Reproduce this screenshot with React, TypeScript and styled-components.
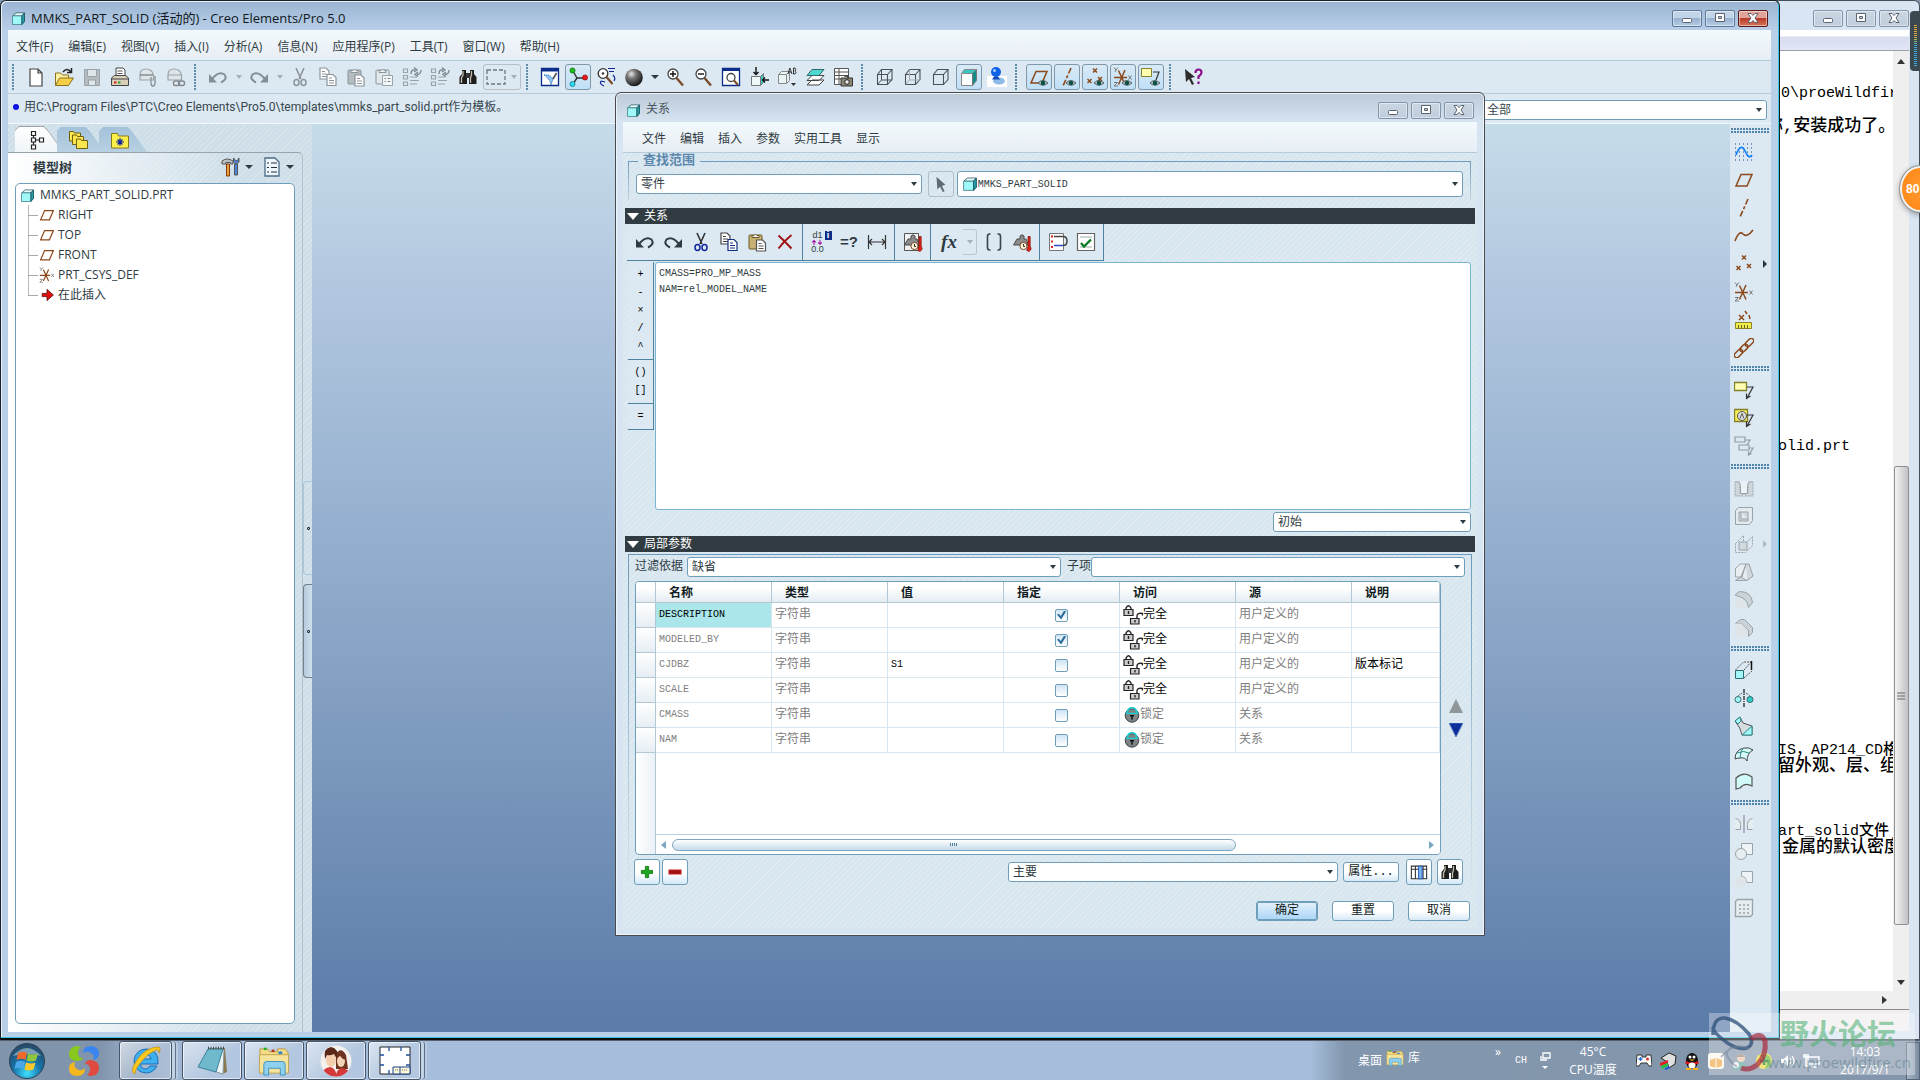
import React from "react";
import styled, { createGlobalStyle, css } from "styled-components";

const UI = '"Open Sans", "Noto Sans CJK SC", sans-serif';
const NARROW = 'Roboto, "Noto Sans CJK SC", sans-serif';
const SONG = '"Liberation Mono", "Noto Sans CJK SC", monospace';
const INK = "#2f3b42";
const EDGE = "#6f9fb8";
const RULE = "#4f81a3";

const GlobalStyle = createGlobalStyle`
  *, *::before, *::after { box-sizing: border-box; }
  html, body { margin: 0; height: 100%; overflow: hidden; }
  body { font-family: ${UI}; font-size: 12px; line-height: 16px; color: ${INK}; background: #8397ae; }
  button, select, input, textarea { font: inherit; color: inherit; margin: 0; border-radius: 0; }
  button { border: 0; background: none; padding: 0; }
  ul { list-style: none; margin: 0; padding: 0; }
  svg { display: block; flex: none; }
`;

/* ------------------------------------------------------------------ icons */

const g = "#9aa3a8";
const br = "#8c4a1c";
const cy = "#a0f8f8";

const planeShape = <path d="M7 4.500H18L13 16H2Z" fill="none" stroke={br} strokeWidth="1.500" />;
const axisShape = <path d="M14 1L6 19" stroke={br} strokeWidth="1.600" strokeDasharray="6 2 3 2" />;
const crosses = (
  <path d="M8 1.500l4 4m0-4l-4 4M2.500 12l4 4m0-4l-4 4M13 10l4 4m0-4l-4 4" stroke={br} strokeWidth="1.500" />
);
const csysShape = (
  <>
    <path d="M1 10.500H14M5.500 3.500l6.500 14M12 3L5.500 17.500" stroke={br} strokeWidth="1.500" fill="none" />
    <path d="M1 0.500l2 2.500L5 .500M3 3L2 5M15.500 8.500l3 4m0-4l-3 4M1 15.500h3.500L1 19h4" stroke="#777" fill="none" />
  </>
);
const eye = (
  <>
    <path d="M9 16q4.500-5 10 0q-5 4.500-10 0z" fill="#b9c8cc" stroke="#444" strokeWidth=".8" />
    <circle cx="14" cy="16" r="2.300" fill="#0b5148" />
  </>
);
const lens = (
  <>
    <circle cx="8" cy="7" r="5" fill="#fff" stroke="#444" strokeWidth="1.300" />
    <path d="M11.500 11l6.500 7.500" stroke="#7a4a2a" strokeWidth="2.400" />
  </>
);
const cubeWire = (c: string, hidden?: string) => (
  <>
    <path d="M2.500 7.500h10v10h-10zM2.500 7.500l4-5h10.500v10l-4.500 5M12.500 7.500l4.500-5" fill="none" stroke={c} strokeWidth="1.100" />
    {hidden && <path d="M6.500 2.500v10.500h10.500M6.500 13l-4 4.500" fill="none" stroke={hidden} strokeWidth="1" />}
  </>
);
const page = (x: number, y: number, s: string) => (
  <>
    <path d={`M${x} ${y}h6l3 3v8h-9z`} fill="#fff" stroke={s} strokeWidth="1.200" />
    <path d={`M${x + 2} ${y + 3.5}h3m-3 2.500h5m-5 2.500h5`} stroke={s} />
  </>
);
const clip = (c: string, f: string) => (
  <>
    <rect x="2" y="3" width="13" height="14" rx="1" fill={f} stroke={c} />
    <path d="M5 5.500V3.500h2q1.500-3 3 0h2v2z" fill="#eee" stroke={c} />
  </>
);
const scissors = (a: string, b: string) => (
  <>
    <path d="M6 1l5 11M14 1L9 12" stroke={a} strokeWidth="1.600" fill="none" />
    <ellipse cx="6.500" cy="15.500" rx="2.500" ry="3" fill="none" stroke={b} strokeWidth="1.500" />
    <ellipse cx="13.500" cy="15.500" rx="2.500" ry="3" fill="none" stroke={b} strokeWidth="1.500" />
  </>
);
const undoShape = (c: string) => (
  <>
    <path d="M4 12Q11 3.500 16.500 7.500Q20 12 13 15.500" fill="none" stroke={c} strokeWidth="2" />
    <path d="M1 7v8.500h8z" fill={c} />
  </>
);
const regen = (
  <>
    <path d="M1.500 2h4v3.500h-4zM1.500 8.500h4v3.500h-4zM1.500 15h4v3.500h-4zM8 10h7M8 13.500h9M8 17h7" fill="none" stroke={g} strokeWidth="1.200" />
    <path d="M9 7q0-5 4-4M19 3q0 4.500-4 4.500M12 .500l3 2.500-3 2M16 5l-3 2.500 3 2" fill="none" stroke="#7c868b" strokeWidth="1.300" />
  </>
);
const binoculars = (
  <>
    <path d="M4 3h4v4l1 3v7H1.500v-7L4 7zM12 3h4v4l2.500 3v7H11v-7l1-3z" fill="#1d1d1b" />
    <path d="M8 6h4v5H8z" fill="#333" />
    <path d="M5 4v4l-1.500 3v5M13.500 4v4l-1 3v5" stroke="#c5bfae" strokeWidth="1.300" fill="none" />
  </>
);
const weight = <path d="M1.500 13L5 7h3V4q2-2.500 4 0v3h2l2.500 6z" fill="#8b8b8b" stroke="#4b4b4b" />;
const thermo = (
  <>
    <circle cx="11.500" cy="14" r="3.600" fill="#fff3d8" stroke="#7a4a2a" />
    <path d="M11.500 12v2.500h1.500" stroke="#333" fill="none" />
    <path d="M16 4.500h2.200v9.500l1 3-2 2.500-2.500-1 1.300-4z" fill="#e22418" stroke="#7d120c" strokeWidth=".7" />
  </>
);
const noteArrow = (c: string) => <path d="M13 7h6l-6 11M12.500 13.500v5l4-2.500" fill="none" stroke={c} strokeWidth="1.200" />;

const icons: Record<string, React.ReactNode> = {
  part: (
    <>
      <path d="M2.500 6l4-3.500h11.500v11.500l-3.500 4z" fill="#1e6f78" />
      <path d="M2.500 6.500l4-4h11.500l-3.500 4z" fill="#e9ffff" stroke="#2c5960" />
      <path d="M2 6.500h12.500v11.500h-12.500z" fill={cy} stroke="#3f7c84" />
      <path d="M14.500 6.500l3.500-4v11.500l-3.500 4z" fill="#279eaa" stroke="#174d55" />
    </>
  ),
  newFile: <path d="M4 2h8l4 4v13H4zM12 2v4h4" fill="#fff" stroke="#444" strokeWidth="1.200" />,
  open: (
    <>
      <path d="M1.500 18V6h5l2 2h6v4" fill="#fff3a0" stroke="#8a7320" />
      <path d="M1.500 18.500l4-7.500h14l-5 7.500z" fill="#f4cf45" stroke="#8a7320" />
      <path d="M9 5q4-5 8 0M17.500 1v4.500H13" fill="none" stroke="#222" strokeWidth="1.500" />
    </>
  ),
  save: (
    <>
      <path d="M2.500 2.500h15v16h-15z" fill="#b4bcc0" stroke="#9ba4a9" />
      <path d="M5.500 2.500h9v7h-9zM6.500 13h7v5.500h-7z" fill="#dfe6ea" stroke={g} />
    </>
  ),
  print: (
    <>
      <path d="M6 9V1h7l2 2v6" fill="#fff" stroke="#444" />
      <path d="M7.500 4h5m-5 2.500h5" stroke="#555" />
      <path d="M1.500 11l3-2.500h11l3 2.500v7.500h-17z" fill="#d9cfb9" stroke="#444" />
      <path d="M2 12h16" stroke="#444" />
      <path d="M4 15.500h2.500" stroke="#d22" strokeWidth="2" />
      <path d="M8 15.500h2.500" stroke="#2a2" strokeWidth="2" />
    </>
  ),
  mail: (
    <>
      <path d="M2 13V8q0-6 6-6q6 0 7.500 6v5z" fill="#dfe6ea" stroke={g} strokeWidth="1.200" />
      <path d="M2 8h13M13 10v6q0 3 2 3t2-3V9" fill="none" stroke="#888f94" strokeWidth="1.300" />
    </>
  ),
  mailLink: (
    <>
      <path d="M2 13V8q0-6 6-6q6 0 7.500 6v5z" fill="#dfe6ea" stroke={g} strokeWidth="1.200" />
      <path d="M2 8h13" stroke={g} />
      <rect x="7.500" y="14" width="6" height="4.500" rx="2" fill="#e8eef1" stroke="#80888d" strokeWidth="1.400" />
      <rect x="12.500" y="14" width="6" height="4.500" rx="2" fill="none" stroke="#80888d" strokeWidth="1.400" />
    </>
  ),
  undoOff: undoShape("#848e94"),
  redoOff: <g transform="matrix(-1 0 0 1 20 0)">{undoShape("#848e94")}</g>,
  undo: undoShape("#2e3c42"),
  redo: <g transform="matrix(-1 0 0 1 20 0)">{undoShape("#2e3c42")}</g>,
  cutOff: scissors("#8b9499", "#8b9499"),
  cut: scissors("#333", "#10259a"),
  copyOff: <>{page(2, 1, "#8b9499")}{page(9, 7.5, "#8b9499")}</>,
  copy: <>{page(2, 1, "#444")}{page(9, 7.5, "#12307f")}</>,
  pasteOff: <>{clip("#8b9499", "#b5bdc1")}{page(9, 8, "#8b9499")}</>,
  paste: <>{clip("#6b5a28", "#c8b273")}{page(9.5, 8, "#555")}</>,
  pasteSpecial: <>{clip("#8b9499", "#e2e9ed")}<path d="M8.500 8.500h10v10h-10z" fill="#f3f7f9" stroke={g} /><path d="M10.500 11.500h1.500m1.500 0h3m-6 3h1.500m1.500 0h3" stroke="#888" /></>,
  regen,
  find: binoculars,
  repaint: (
    <>
      <path d="M1.500 1.500h17v17h-17z" fill="#fff" stroke="#0c2e8a" strokeWidth="1.300" />
      <path d="M1 1h18v3.500H1z" fill="#0c2e8a" />
      <path d="M4 8q6-1 9 4l-2 6q-1-6-7-10z" fill="#8fc4f4" stroke="#2468b4" strokeDasharray="1 1" />
      <path d="M16.500 6l-3.500 6" stroke="#555" strokeWidth="1.700" />
    </>
  ),
  spin: (
    <>
      <path d="M5 4l4 7h8M9 11l-4 6" fill="none" stroke="#333" strokeWidth="1.400" />
      <circle cx="4.500" cy="3.500" r="2.600" fill="#18c018" stroke="#0a5a0a" strokeWidth=".6" />
      <circle cx="17" cy="10.500" r="2.600" fill="#e81c1c" stroke="#7a0a0a" strokeWidth=".6" />
      <circle cx="4.500" cy="17" r="2.600" fill="#28d8e8" stroke="#0a6a7a" strokeWidth=".6" />
    </>
  ),
  orient: (
    <>
      <circle cx="7" cy="6.500" r="4.800" fill="#fff" stroke="#333" strokeWidth="1.300" />
      <circle cx="7" cy="6.500" r="1.200" fill="#333" />
      <path d="M10.500 10l6 7" stroke="#7a4a2a" strokeWidth="2.200" />
      <path d="M12 1.500h7M13 4.500h5M5 14q-2 3 3 5M17 8q3 3 1 6M5 14l4 1" stroke="#10259a" fill="none" strokeWidth="1.200" />
    </>
  ),
  sphere: (
    <>
      <defs>
        <radialGradient id="ball" cx=".35" cy=".3" r=".75">
          <stop offset="0" stopColor="#e8e8e8" />
          <stop offset=".35" stopColor="#777" />
          <stop offset="1" stopColor="#111" />
        </radialGradient>
      </defs>
      <circle cx="10" cy="10.500" r="8.800" fill="url(#ball)" />
    </>
  ),
  zoomIn: <>{lens}<path d="M5 7h6M8 4v6" stroke="#111" strokeWidth="1.400" /></>,
  zoomOut: <>{lens}<path d="M5 7h6" stroke="#111" strokeWidth="1.400" /></>,
  refit: (
    <>
      <path d="M1.500 1.500h17v17h-17z" fill="#fff" stroke="#0c2e8a" strokeWidth="1.300" />
      <path d="M1 1h18v3H1z" fill="#0c2e8a" />
      <circle cx="10" cy="10.500" r="4" fill="#fff" stroke="#444" strokeWidth="1.300" />
      <path d="M13 13.500l4 4.500" stroke="#7a4a2a" strokeWidth="2" />
    </>
  ),
  reorient: (
    <>
      <path d="M2.500 9.500h9v9h-9z" fill="#eef8f8" stroke="#777" />
      <path d="M11.500 9.500l3-3v9l-3 3z" fill="#40c8c0" stroke="#777" />
      <path d="M7 0v7M4.500 5L7 7.500 9.500 5M20 13h-6M16 10.500L13.500 13l2.500 2.500" fill="none" stroke="#111" strokeWidth="1.400" />
    </>
  ),
  savedView: (
    <>
      <path d="M1.500 7.500h8v9h-8zM1.500 7.500l3-3h8l-3 3M9.500 16.500l3-3v-9" fill="#e9f6f6" stroke="#888" />
      <path d="M11 7l1.800-6L15 7m-3.300-2h2.500M16.500 1v6h1.500q2-1.500 0-3q1.500-1.500 0-3z" fill="none" stroke="#333" />
      <path d="M14 16h5l-2.500 3z" fill="#333" />
    </>
  ),
  layers: (
    <>
      <path d="M2 18l5-5h12l-5 5zM2 13.500l5-5h12l-5 5z" fill="#fff" stroke="#444" />
      <path d="M2 8.500l5-6h12l-5 6z" fill="#50d8d0" stroke="#2b6a68" />
    </>
  ),
  viewMgr: (
    <>
      <path d="M1.500 1.500h14v16h-14zM1.500 5h14M1.500 8.500h14M1.500 12h14M6 1.500v16" fill="#fff" stroke="#555" />
      <path d="M8 11h11.500v8H8zM11 9h4v2" fill="#8c8674" stroke="#333" />
      <circle cx="14" cy="15" r="2.300" fill="#eee" stroke="#222" />
    </>
  ),
  wire: cubeWire("#4b5357", "#4b5357"),
  hiddenLine: cubeWire("#4b5357", "#a5adb1"),
  noHidden: cubeWire("#4b5357"),
  shaded: (
    <>
      <path d="M2.500 6.500l3-4h12l-4 4z" fill="#38c8c0" stroke="#888" />
      <path d="M2.500 6.500h11v12h-11z" fill="#fff" stroke="#888" />
      <path d="M13.500 6.500l4-4v11l-4 5z" fill="#168c88" stroke="#777" />
    </>
  ),
  enhanced: (
    <>
      <path d="M0 9h20v11H0z" fill="#fff" />
      <ellipse cx="12" cy="14" rx="6" ry="3.500" fill="#8fbbe8" />
      <circle cx="9" cy="5" r="5" fill="#0e62e8" />
      <circle cx="7.500" cy="3.500" r="1.500" fill="#a8d0ff" />
      <path d="M7 9.500h4l2 3H5z" fill="#0c4cb4" />
    </>
  ),
  planeEye: <>{planeShape}{eye}</>,
  axisEye: <>{axisShape}{eye}</>,
  pointEye: <>{crosses}{eye}</>,
  csysEye: <>{csysShape}{eye}</>,
  noteEye: <><path d="M.500 1.500h10v8h-10z" fill="#ffffb0" stroke="#888030" /><path d="M12 5h6l-3 8" fill="none" stroke="#333" strokeWidth="1.200" />{eye}</>,
  help: (
    <>
      <path d="M2 2l1 13 3-3 3 6 2-1-3-6 4-1z" fill="#2d2d2d" />
      <path d="M12.500 6q0-3.500 3-3.500t3 3q0 2-3 4v2.500M15.500 14.500v2.500" fill="none" stroke="#8a108a" strokeWidth="2.200" />
    </>
  ),
  sketch: (
    <>
      <path d="M1 2h18M1 6h18M1 10h18M1 14h18M1 18h18" stroke="#1a3c90" strokeDasharray="1 3" />
      <path d="M2 13q5-13 9-4t7 4" fill="none" stroke="#1484ff" strokeWidth="1.800" />
    </>
  ),
  plane: planeShape,
  axis: axisShape,
  curve: <path d="M1 15Q5 4 9 8t10-4" fill="none" stroke={br} strokeWidth="1.600" />,
  points: crosses,
  csys: csysShape,
  ruler: (
    <>
      <path d="M5 5l5 5m0-5l-5 5M11 1l2 3M15 5l1 4" stroke={br} strokeWidth="1.500" />
      <path d="M1.500 12.500h16v6h-16z" fill="#f0ec50" stroke="#8c8420" />
      <path d="M4.500 18v-3m3 3v-3m3 3v-3m3 3v-3" stroke="#6a641a" />
    </>
  ),
  chain: (
    <g fill="none" stroke={br} strokeWidth="1.500">
      <rect x="-5" y="-2.500" width="10" height="5" rx="2.500" transform="translate(4.500 15.500) rotate(-45)" />
      <rect x="-4.500" y="-2.500" width="9" height="5" rx="2.500" transform="translate(10 10) rotate(-45)" />
      <rect x="-5" y="-2.500" width="10" height="5" rx="2.500" transform="translate(15.500 4.500) rotate(-45)" />
    </g>
  ),
  note: <><path d="M.500 2.500h12v8H.500z" fill="#ffffb4" stroke="#85802a" strokeWidth="1.300" />{noteArrow("#333")}</>,
  noteSym: <><path d="M.500 1.500h13v12H.500z" fill="#f2ee58" stroke="#85802a" strokeWidth="1.300" /><circle cx="8" cy="8" r="4.500" fill="#ddd" stroke="#555" /><path d="M6 10.500L8 5.500l2 5" fill="none" stroke="#555" />{noteArrow("#333")}</>,
  noteOff: <path d="M1 1h10v5H1zM5 9h10v5H5zM11 4h5l-3 5M15 12h4l-4 7M14.500 15.500v3.500l3-1.500" fill="none" stroke="#929ca2" strokeWidth="1.200" />,
  hole: <><path d="M1 4h5v11l3 1v2H1zM19 4h-5v11l-3 1v2h8z" fill="#cfd8dd" stroke={g} strokeDasharray="2 1" /><path d="M3 3.500q3.500.500 3.500 4v8h7v-8q0-3.500 3.500-4" fill="#eef3f6" stroke={g} /></>,
  shell: <><path d="M1.500 4.500l3-3h14v13l-3 4h-14z" fill="#e4ebef" stroke={g} /><path d="M5 6h9v9H5zM7 6v7h7" fill="#d0d9de" stroke={g} /></>,
  rib: <><path d="M1.500 9.500l8-8v6M1.500 9.500v9h10l7-7v-9l-7 7" fill="none" stroke={g} strokeDasharray="2 1" /><path d="M5 8h8v8H5z" fill="#d0d9de" stroke={g} /></>,
  draft: <><path d="M12 2h3l4 12-6 4.500H1.500l5-3z" fill="#cfd8dd" stroke={g} /><path d="M1.500 6.500l5-4.500H12L8 15H1.500zM12 2l-5 13 6 3.500" fill="#e8eef1" stroke={g} /></>,
  round: <><path d="M1.500 4.500l4-3q12 0 13 11l-4 5q-1-10-13-12z" fill="#cbd3d8" stroke={g} /><path d="M1.500 8q9 0 12 10h-12z" fill="#dfe4e8" /></>,
  chamfer: <><path d="M1.500 5.500l5-4h4l8 8v5l-4 4v-6L7 5.500z" fill="#cbd3d8" stroke={g} /><path d="M1.500 5.500H7l7 7v6H1.500z" fill="#dfe4e8" /></>,
  extrude: <><path d="M1.500 10.500h8v8h-8z" fill={cy} stroke="#336a70" /><path d="M1.500 10l8-8h8M10 10l7-8M10 18l8-7" fill="none" stroke="#555" strokeDasharray="2 1" /><path d="M17.500 1v9" stroke="#111" strokeWidth="1.500" /></>,
  revolve: <><path d="M10 1v18" stroke="#333" strokeDasharray="4 1 1 1" strokeWidth="1.400" /><circle cx="4" cy="11.500" r="3" fill={cy} stroke="#336a70" /><circle cx="16" cy="11.500" r="3" fill="#30d0c8" stroke="#336a70" /><path d="M4 8q6-6 12 0" fill="none" stroke="#666" strokeDasharray="2 1" /></>,
  sweep: <><path d="M1 5l5-4 3 6 9 3v9H8Q7 12 1 5z" fill="#d6dcdf" stroke="#555" /><path d="M1 5l5-4 1 4-3 3zM8 19l10-9v9z" fill={cy} stroke="#2b8a88" /></>,
  blend: <><path d="M1 15q0-9 9-11 5-1 9 2-6 3-6 11-2-4-7-3-3 0-5 1z" fill="#d8fbfa" stroke="#444" /><path d="M3 9q7-3 12 0M9 4q-3 5-3 10" fill="none" stroke="#2b8a88" /></>,
  style: <path d="M2 6q8-7 16-1v9q-7-4-12 2l-4 1z" fill="#d0fbf8" stroke="#555" strokeWidth="1.200" />,
  mirror: <><path d="M10 1v18" stroke={g} strokeWidth="1.500" /><path d="M1.500 4.500q5 1 5 6v5h-5M18.500 4.500q-5 1-5 6v5h5" fill="#e6edf1" stroke={g} /></>,
  merge: <><path d="M7.500 1.500h11v11h-11z" fill="#eef3f6" stroke={g} /><circle cx="7" cy="12" r="5.500" fill="#e6edf1" stroke={g} /></>,
  trim: <><path d="M7.500 1.500h11v11h-6q0-6-5-6z" fill="#eef3f6" stroke={g} /><circle cx="7" cy="12" r="5.500" fill="#dfe4e8" /></>,
  pattern: <><path d="M1.500 3.500l2-2h15v15l-2 2h-15z" fill="#e6edf1" stroke={g} strokeWidth="1.300" /><path d="M5 7h11M5 11h11M5 15h11" stroke={g} strokeWidth="1.500" strokeDasharray="2 2" /></>,
  treeTab: <path d="M5.500 1.500h4v4h-4zM5.500 8h4v4h-4zM5.500 15h4v4h-4zM13.500 8h4v4h-4zM7.500 5.500V8M7.500 12v3M9.500 10h4" fill="#fff" stroke="#222" strokeWidth="1.200" />,
  folders: (
    <g fill="#fbe64e" stroke="#6e6110">
      <path d="M1.500 1.500h4l1 1.500h6v8h-11z" />
      <path d="M4.500 5h4l1 1.500h6v8h-11z" />
      <path d="M8.500 9h4l1 1.500h6v8h-11z" />
    </g>
  ),
  favFolder: (
    <>
      <path d="M1.500 3.500h6l1 2.500h10v12h-17z" fill="#fdf04a" stroke="#8a7b18" />
      <path d="M10 8v8M6 12h8M7.500 9.500l5 5M12.500 9.500l-5 5" stroke="#10259a" strokeWidth="1.200" />
    </>
  ),
  tools: (
    <>
      <path d="M1 4q5-4 11 0v3H9.500V5.500H5V7H1z" fill="#b9c0c2" stroke="#555" />
      <path d="M5.500 7h3v12h-3z" fill="#e8a23c" stroke="#8a3a10" />
      <path d="M12.500 1v4l2.500 2 3-2V1l-1.500 2.500h-2zM13.500 7h3v11h-3z" fill="#4a86dc" stroke="#555" />
    </>
  ),
  list: (
    <>
      <path d="M3 1h10l4 4v14H3z" fill="#eef5fb" stroke="#4c6a86" strokeWidth="1.300" />
      <path d="M5 6h2m2 0h6M5 10.500h2m2 0h6M5 15h2m2 0h6" stroke="#234" strokeWidth="1.200" />
    </>
  ),
  insert: <path d="M4 8h6V3l8 7-8 7v-5H4z" fill="#e01010" stroke="#5a0808" />,
  cursor: <path d="M5 2l1 14 3-3 3 6 2-1-3-6 4-1z" fill="#5d6a72" />,
  del: <path d="M3.500 3.500q6 5.500 13 13M16.500 3Q9 9 3.500 16.500" fill="none" stroke="#a01414" strokeWidth="2" />,
  measure: <path d="M1.500 3v14M18.500 3v14M2 10h16M5 7l-3 3 3 3M15 7l3 3-3 3" fill="none" stroke="#333" strokeWidth="1.200" />,
  dims: <path d="M3.500 8V2M1 4.500L3.500 2 6 4.500M11.500 1v6M9 4.500L11.500 7 14 4.500" fill="none" stroke="#a010a0" strokeWidth="1.400" />,
  massBox: <><path d="M1.500 1.500h14v17h-14z" fill="#eef2f2" stroke="#555" />{weight}{thermo}</>,
  mass: <g>{weight}{thermo}</g>,
  brackets: <path d="M6.500 2H5.500q-2 0-2 2.500v11q0 2.500 2 2.500h1M13.500 2h1q2 0 2 2.500v11q0 2.500-2 2.500h-1" fill="none" stroke="#3a4348" strokeWidth="1.600" />,
  sortRel: <><path d="M1.500 1.500h14v17h-14z" fill="#fff" stroke="#777" /><path d="M3 4.500h2M3 9.500h2M3 15h2" stroke="#d22" strokeWidth="2" /><path d="M6 4.500h9q4 0 4 4.500t-4 4.500" fill="none" stroke="#444" strokeWidth="1.500" /><path d="M6 13.500h9" stroke="#244ad0" strokeWidth="1.500" /></>,
  verify: <><path d="M1.500 1.500h17v17h-17z" fill="#fff" stroke="#666" strokeWidth="1.200" /><path d="M4 5h12M4 15h12" stroke="#9aa" /><path d="M5 11l3 3.500 7-7" fill="none" stroke="#0a7a20" strokeWidth="2.300" /></>,
  plus: <path d="M8 3h4v5h5v4h-5v5H8v-5H3V8h5z" fill="#18a818" stroke="#0b6d12" />,
  minus: <path d="M3 7.500h14v5H3z" fill="#a01010" stroke="#e0605c" strokeWidth=".8" />,
  columns: <><path d="M1.500 3.500h17v14h-17zM1.500 7h17M6 3.500v14M14.500 3.500v14" fill="#fff" stroke="#333" strokeWidth="1.200" /><path d="M9.500 3.500h4v14h-4z" fill="#7db8f5" stroke="#1c52b0" /></>,
  lockOpen: (
    <>
      <path d="M3 5V3q2.500-4.500 5 0v2M14 13V11q0-3.500 5.500-2.500v2" fill="none" stroke="#222" strokeWidth="1.400" />
      <path d="M1 4.500h9v6H1zM7.500 13.500h8.500v5.500H7.500z" fill="#ccc" stroke="#222" strokeWidth="1.200" />
      <path d="M5.500 6v3M12 15v2.500" stroke="#222" strokeWidth="1.400" />
    </>
  ),
  locked: (
    <>
      <circle cx="10" cy="10.500" r="8.500" fill="#7d8587" stroke="#1d2627" />
      <path d="M4 7q1-6 6-6t6 6" fill="none" stroke="#16d2d6" strokeWidth="2" />
      <path d="M2 8h16" stroke="#16d2d6" strokeWidth="1.600" />
      <path d="M7.500 11h5M10 11v5" stroke="#111" strokeWidth="1.800" />
    </>
  ),
};

const Icon = ({ name, size = 20 }: { name: string; size?: number }) => (
  <svg width={size} height={size} viewBox="0 0 20 20" aria-hidden="true">
    {icons[name]}
  </svg>
);

/* ---------------------------------------------------------- shared pieces */

const hatch = "repeating-linear-gradient(135deg, rgba(255,255,255,.2) 0 1px, transparent 1px 4px)";

const Caption = styled.header<{ $muted?: boolean; $flush?: boolean }>`
  display: flex;
  align-items: center;
  gap: 5px;
  height: 29px;
  padding: 5px ${(p) => (p.$flush ? 0 : 3)}px 0 3px;
  font-size: 13px;
  color: ${(p) => (p.$muted ? "#4a5560" : "#101820")};
`;

const CaptionTitle = styled.h1<{ $song?: boolean }>`
  flex: 1;
  margin: 0;
  font: inherit;
  font-size: ${(p) => (p.$song ? 12 : 13)}px;
  font-family: ${(p) => (p.$song ? SONG : UI)};
  white-space: nowrap;
`;

const CaptionButtons = styled.div`
  display: flex;
  gap: 3px;
`;

const CaptionButton = styled.button<{ $tone?: "blue" | "red" }>`
  display: grid;
  place-items: center;
  width: 30px;
  height: 17px;
  border: 1px solid ${(p) => (p.$tone === "red" ? "#5a1a1c" : p.$tone === "blue" ? "#5f7798" : "#8393aa")};
  border-radius: 2px;
  box-shadow: inset 0 0 0 1px rgba(255, 255, 255, 0.45);
  background: ${(p) =>
    p.$tone === "red"
      ? "linear-gradient(#e2a49a 0 45%, #b93a28 50%, #d4775c)"
      : p.$tone === "blue"
        ? "linear-gradient(#c2d4e8 0 45%, #98b2d0 50%, #b5cce5)"
        : "linear-gradient(#cbd6e2, #c0cddc)"};
`;

const WindowButtons = ({ tone, close }: { tone?: "blue"; close?: "red" }) => (
  <CaptionButtons>
    <CaptionButton $tone={tone} aria-label="最小化">
      <svg width="12" height="12" viewBox="0 0 12 12"><rect x="1.500" y="6.500" width="9" height="4" rx="1" fill="#fff" stroke="#5b636f" /></svg>
    </CaptionButton>
    <CaptionButton $tone={tone} aria-label="最大化">
      <svg width="12" height="12" viewBox="0 0 12 12"><path d="M1.500 1.500h9v8h-9zM4.500 4.500v2h3v-2z" fill="#fff" fillRule="evenodd" stroke="#5b636f" /></svg>
    </CaptionButton>
    <CaptionButton $tone={close ?? tone} aria-label="关闭">
      <svg width="12" height="12" viewBox="0 0 12 12"><path d="M1 1.500h3l2 2 2-2h3L8 6l3 4.500H8l-2-2-2 2H1L4 6z" fill="#fff" stroke="#5b636f" /></svg>
    </CaptionButton>
  </CaptionButtons>
);

const MenuBar = styled.nav<{ $song?: boolean }>`
  display: flex;
  align-items: center;
  gap: ${(p) => (p.$song ? 14 : 15)}px;
  height: 31px;
  padding: ${(p) => (p.$song ? "5px 19px 0" : "4px 8px 0")};
  font-family: ${(p) => (p.$song ? SONG : UI)};
  background: linear-gradient(#f3fafd, #e7edf4);
  border-bottom: 1px solid #b4cbdc;
`;

const Caret = styled.span<{ $off?: boolean }>`
  width: 0;
  height: 0;
  border: ${(p) => (p.$off ? 3 : 4)}px solid transparent;
  border-top: 4px solid ${(p) => (p.$off ? "#a5b0b6" : "#2f3b42")};
  border-bottom: 0;
`;

const SelectBox = styled.span<{ $tall?: boolean; $icon?: boolean }>`
  position: relative;
  display: block;
  min-width: 0;
  height: ${(p) => (p.$tall ? 26 : 20)}px;
  border: 1px solid ${EDGE};
  border-radius: 3px;
  background: #fff;
  font-family: ${SONG};
  select {
    appearance: none;
    width: 100%;
    height: 100%;
    display: block;
    padding: 1px 20px 0 ${(p) => (p.$icon ? 20 : 4)}px;
    border: 0;
    background: transparent;
    font-size: ${(p) => (p.$icon ? 10 : 12)}px;
    outline: 0;
  }
  > svg { position: absolute; left: 4px; top: 4px; }
  &::after {
    content: "";
    position: absolute;
    right: 4px;
    top: calc(50% - 2px);
    border: 3px solid transparent;
    border-top: 4px solid ${INK};
    border-bottom: 0;
  }
`;

const Select = ({ id, label, value, tall, icon }: { id?: string; label?: string; value: string; tall?: boolean; icon?: string }) => (
  <SelectBox $tall={tall} $icon={!!icon}>
    {icon && <Icon name={icon} size={16} />}
    <select id={id} aria-label={label} defaultValue={value}>
      <option>{value}</option>
    </select>
  </SelectBox>
);

const ToolButton = styled.button<{ $on?: boolean }>`
  display: grid;
  place-items: center;
  width: 26px;
  height: 26px;
  margin: 0 1px;
  border-radius: 3px;
  border: 1px solid transparent;
  ${(p) => p.$on && css`
    border-color: #7f98aa;
    background: linear-gradient(#d9eaf5, #bfe0f8);
  `}
`;

/* --------------------------------------------------------------- desktop */

const Desktop = styled.div`
  position: relative;
  display: grid;
  grid-template-rows: minmax(0, 1fr) 40px;
  height: 100vh;
  overflow: hidden;
`;

const BackWindow = styled.section`
  position: absolute;
  top: 0;
  right: 0;
  bottom: 40px;
  width: 200px;
  display: flex;
  flex-direction: column;
  padding: 0 10px 8px 0;
  background: #d9e5f2;
  border: 1px solid #46505a;
  border-left: 0;
  border-radius: 0 6px 0 0;
`;

const BackMenu = styled.div`
  height: 21px;
  background: linear-gradient(#fff 0 30%, #d7dcef 35%, #e2e6f5);
  border-bottom: 1px solid #9a9fa8;
`;

const BackBody = styled.div`
  flex: 1;
  min-height: 0;
  display: grid;
  grid-template-columns: minmax(0, 1fr) 16px;
  grid-template-rows: minmax(0, 1fr) 18px;
  background: #efefef;
`;

const Note = styled.article`
  overflow: hidden;
  padding-left: 46px;
  background: #fff;
  color: #000;
  font-family: ${SONG};
  font-size: 15px;
  font-weight: 500;
  white-space: pre;
`;

const NoteLine = styled.p<{ $gap?: number; $indent?: number; $cjk?: boolean }>`
  margin: ${(p) => p.$gap ?? 0}px 0 0 ${(p) => p.$indent ?? 12}px;
  line-height: 16px;
  font-size: ${(p) => (p.$cjk ? 17 : 15)}px;
`;

const NoteScroll = styled.div`
  display: flex;
  flex-direction: column;
  align-items: center;
  padding: 8px 0 6px;
`;

const Thumb = styled.div`
  flex: 457;
  width: 15px;
  display: grid;
  place-items: center;
  border: 1px solid #909090;
  border-radius: 2px;
  background: linear-gradient(90deg, #f4f4f4, #dcdcdc 45%, #c2c2c4);
`;

const Spacer = styled.div<{ $n: number }>`
  flex: ${(p) => p.$n};
`;

const NoteHScroll = styled.div`
  display: flex;
  align-items: center;
  justify-content: flex-end;
  padding-right: 6px;
`;

const BackStatus = styled.footer`
  height: 22px;
  background: #f0eeef;
  border-top: 1px solid #8c8c8c;
`;

/* ----------------------------------------------------------- main window */

const MainWindow = styled.main`
  position: relative;
  display: flex;
  flex-direction: column;
  margin-right: 140px;
  min-height: 0;
  padding: 0 8px 6px 7px;
  border: 1px solid #1b1f24;
  border-bottom: 2px solid #0c0c0c;
  border-radius: 6px 6px 0 0;
  box-shadow: inset -1px -1px 0 #34c8e8, inset 1px 1px 0 #e8f2fb;
  background: linear-gradient(#9ab4d2, #b9d0e9 30px, #b9cfe8);
`;

const Toolbar = styled.div`
  display: flex;
  align-items: center;
  height: 33px;
  background: #dce9f2;
  border-bottom: 1px solid #b4cbdc;
`;

const Handle = styled.span`
  width: 14px;
  height: 27px;
  background: radial-gradient(circle at 1px 1px, #5f8cab 0 1px, transparent 1px) 0 0 / 3px 3px;
  background-clip: content-box;
  background-origin: content-box;
  padding: 0 7px 0 4px;
`;

const DropButton = styled.button`
  display: grid;
  place-items: center;
  width: 13px;
  height: 26px;
`;

const SelectionBox = styled.button`
  display: grid;
  grid-template-columns: 24px 12px;
  place-items: center;
  width: 38px;
  height: 26px;
  margin: 0 1px;
  border: 1px solid #b6c0c6;
  border-radius: 3px;
  > :last-child { box-shadow: none; }
`;

const MessageRow = styled.div`
  display: flex;
  align-items: center;
  height: 30px;
  padding: 0 4px 3px 5px;
  background: #dce9f2;
  border-bottom: 1px solid #f2f8fb;
  color: #38464e;
  font-family: ${NARROW};
`;

const Bullet = styled.span`
  width: 6px;
  height: 6px;
  margin-right: 5px;
  border-radius: 3px;
  background: #0a12e0;
`;

const FilterHolder = styled.div`
  align-self: flex-end;
  width: 289px;
  margin-left: auto;
  select { padding-left: 8px; }
`;

const Work = styled.div`
  flex: 1;
  min-height: 0;
  display: grid;
  grid-template-columns: 304px minmax(0, 1fr) 41px;
`;

const Canvas = styled.div`
  background: linear-gradient(#c6dcea, #b0c5de 20%, #9ab4d2 40%, #829fc2 63%, #5b7ba8);
`;

const SidePanel = styled.aside`
  display: flex;
  flex-direction: column;
  min-height: 0;
  background: ${hatch}, #cfdfe9;
`;

const Tabs = styled.div`
  display: flex;
  align-items: flex-end;
  height: 28px;
  padding-left: 7px;
`;

const TabShadow = styled.div<{ $on?: boolean }>`
  margin-right: -6px;
  filter: ${(p) => (p.$on ? "drop-shadow(0 -1px 0 #9aa0a4)" : "none")};
`;

const Tab = styled.button<{ $on?: boolean }>`
  display: flex;
  align-items: center;
  width: 48px;
  height: 25px;
  padding-left: 11px;
  clip-path: polygon(0 4px, 4px 0, 60% 0, 68% 4px, 100% 100%, 0 100%);
  background: ${(p) => (p.$on ? "linear-gradient(#fff, #eef4f7)" : "linear-gradient(#a3c2da, #b9d1e2)")};
`;

const SideBody = styled.div`
  flex: 1;
  min-height: 0;
  display: grid;
  grid-template-columns: minmax(0, 1fr) 9px;
`;

const TreePane = styled.div`
  display: flex;
  flex-direction: column;
  min-height: 0;
  padding: 0 7px 8px;
  border-top: 1px solid #98a4ab;
  border-right: 1px solid #b3c2cc;
  border-radius: 0 5px 0 0;
  background: linear-gradient(90deg, #fff, rgba(255, 255, 255, 0.6) 30%, transparent 75%);
`;

const TreeHead = styled.div`
  display: flex;
  align-items: center;
  gap: 5px;
  height: 30px;
  padding: 0 1px 2px 18px;
  h2 { flex: 1; margin: 0; font-size: 13px; line-height: 16px; }
`;

const HeadButton = styled.button`
  display: flex;
  align-items: center;
  gap: 4px;
  margin-left: 4px;
`;

const TreeBox = styled.div`
  flex: 1;
  min-height: 0;
  padding: 1px 4px;
  border: 1px solid ${EDGE};
  border-radius: 5px;
  background: #fff;
`;

const TreeRow = styled.div`
  display: flex;
  align-items: center;
  gap: 5px;
  height: 20px;
  white-space: nowrap;
`;

const TreeChildren = styled.ul`
  padding-left: 8px;
`;

const TreeItem = styled.li`
  display: flex;
  align-items: center;
  gap: 3px;
  height: 20px;
  background:
    linear-gradient(#a8a8a8, #a8a8a8) 0 10px / 10px 1px no-repeat,
    linear-gradient(#b8b8b8, #b8b8b8) 0 0 / 1px 20px no-repeat;
  padding-left: 11px;
  &:last-child {
    background:
      linear-gradient(#a8a8a8, #a8a8a8) 0 10px / 10px 1px no-repeat,
      linear-gradient(#b8b8b8, #b8b8b8) 0 0 / 1px 10px no-repeat;
  }
`;

const SashColumn = styled.div`
  display: flex;
  flex-direction: column;
  gap: 9px;
  padding-top: 329px;
`;

const Sash = styled.button<{ $dark?: boolean }>`
  display: grid;
  place-items: center;
  height: 94px;
  border: 1px solid ${(p) => (p.$dark ? "#71808b" : "#a9c6da")};
  border-right: 0;
  border-radius: 4px 0 0 4px;
  background: ${(p) => (p.$dark ? "linear-gradient(90deg, #b7cbdd, #cfe0ec)" : "none")};
  &::after { content: ""; width: 3px; height: 3px; border: 1px solid #17262f; border-radius: 1px; }
`;

const FeatureBar = styled.div`
  display: flex;
  flex-direction: column;
  background: #dce9f2;
`;

const FeatureHandle = styled.span`
  flex: none;
  height: 14px;
  padding: 4px 1px;
  background: radial-gradient(circle at 1px 1px, #4f84ab 0 1px, transparent 1px) 0 0 / 3px 3px;
  background-clip: content-box;
  background-origin: content-box;
`;

const FeatureRow = styled.div`
  display: flex;
  align-items: center;
  flex: none;
  height: 28px;
`;

const SideCaret = styled.span<{ $off?: boolean }>`
  margin-left: 5px;
  border: 4px solid transparent;
  border-left-color: ${(p) => (p.$off ? "#b0bbc2" : "#25323a")};
  border-right: 0;
`;

/* --------------------------------------------------------------- dialog */

const Dialog = styled.section`
  position: absolute;
  left: 615px;
  top: 92px;
  width: 870px;
  padding: 0 7px 7px;
  border: 1px solid #4a4a4c;
  border-radius: 6px 6px 0 0;
  background: linear-gradient(#bccad8, #d7e4f1 30px, #d7e4f1);
  box-shadow: inset 0 0 0 1px #edf4fa;
`;

const DialogBody = styled.div`
  background: ${hatch}, #d8e6ef;
`;

const Scope = styled.fieldset`
  margin: 0 6px 8px 5px;
  padding: 2px 7px 3px;
  border: 1px solid #7ea5c3;
  border-bottom: 0;
  border-image: linear-gradient(#6c9abd, #c3d6e3) 1;
  min-width: 0;
  legend {
    margin-left: 2px;
    padding: 0 5px;
    font-family: ${SONG};
    font-size: 13px;
    font-weight: 700;
    line-height: 16px;
    color: #5b87ad;
  }
`;

const ScopeRow = styled.div`
  display: grid;
  grid-template-columns: minmax(0, 286fr) 29px minmax(0, 507fr);
  align-items: center;
  gap: 3px;
  > button { justify-self: end; }
`;

const BoxButton = styled.button<{ $flat?: boolean }>`
  display: grid;
  place-items: center;
  width: 26px;
  height: 26px;
  border: 1px solid ${(p) => (p.$flat ? "#b1bfc9" : EDGE)};
  border-radius: 3px;
  background: ${(p) => (p.$flat ? "none" : "linear-gradient(#fff 55%, #d3e8f8)")};
`;

const SectionBar = styled.button`
  display: flex;
  align-items: center;
  gap: 5px;
  width: calc(100% - 4px);
  height: 16px;
  margin: 0 2px;
  padding: 1px 2px 0;
  background: #313c42;
  color: #fff;
  font-family: ${SONG};
  line-height: 16px;
`;

const SectionCaret = styled.span`
  border: 6px solid transparent;
  border-top: 7px solid #fff;
  border-bottom: 0;
`;

const RelTools = styled.div`
  display: flex;
  width: max-content;
  margin-left: 4px;
`;

const RelGroup = styled.div`
  display: flex;
  align-items: center;
  height: 37px;
  padding: 0 3px 0 4px;
  background: #dce9f2;
  border: solid ${RULE};
  border-width: 0 1px 1px 0;
`;

const Glyph = styled.span<{ $size?: number; $serif?: boolean }>`
  font-family: ${(p) => (p.$serif ? '"Liberation Serif", serif' : '"Liberation Sans", sans-serif')};
  font-style: ${(p) => (p.$serif ? "italic" : "normal")};
  font-weight: 700;
  font-size: ${(p) => p.$size ?? 14}px;
  line-height: 20px;
`;

const InfoGlyph = styled.span`
  display: grid;
  grid-template-columns: 14px 7px;
  grid-template-rows: 8px 6px 8px;
  font: 9px/8px "Liberation Sans", sans-serif;
  b { height: 9px; background: #0c2e8a; color: #fff; line-height: 9px; text-align: center; }
  > svg, > :last-child { grid-column: 1; }
`;

const FxDrop = styled.button`
  display: grid;
  place-items: center;
  width: 14px;
  height: 26px;
  margin-right: 3px;
  border: 1px solid #bac7cf;
  border-left: 0;
  border-radius: 0 3px 3px 0;
`;

const Editor = styled.div`
  display: grid;
  grid-template-columns: 26px minmax(0, 1fr);
  gap: 1px;
  margin: 1px 6px 2px 5px;
`;

const OpGroup = styled.div`
  padding: 4px 0 3px;
  background: #dce9f2;
  border: solid ${RULE};
  border-width: 0 1px 1px 0;
`;

const Op = styled.button`
  display: block;
  width: 100%;
  height: 18px;
  font: 10px/18px ${SONG};
  color: #000;
`;

const RelText = styled.textarea`
  display: block;
  width: 100%;
  height: 248px;
  padding: 3px 3px;
  border: 1px solid #79b4d0;
  border-radius: 3px;
  background: #fff;
  resize: none;
  outline: 0;
  font: 10px/16px ${SONG};
`;

const InitialRow = styled.div`
  width: 198px;
  margin: 0 6px 4px auto;
`;

const Params = styled.div`
  margin: 2px 5px 0;
  padding: 2px 6px 6px;
  border: 1px solid #7ea5c3;
  border-bottom: 0;
  border-image: linear-gradient(#6c9abd, #d8e6ef) 1;
`;

const FilterRow = styled.div`
  display: grid;
  grid-template-columns: 52px minmax(0, 1fr) 30px minmax(0, 1fr);
  align-items: center;
  font-family: ${SONG};
  label { white-space: nowrap; }
  label:nth-of-type(2) { text-align: right; }
`;

const GridRow = styled.div`
  display: grid;
  grid-template-columns: minmax(0, 1fr) 24px;
  margin-top: 4px;
`;

const GridBox = styled.div`
  height: 274px;
  display: flex;
  flex-direction: column;
  border: 1px solid ${EDGE};
  border-radius: 4px;
  overflow: hidden;
  background: linear-gradient(90deg, #fff, #eaf1f6 19px, #b3c5d1 19px, #b3c5d1 20px, #fff 20px);
`;

const Table = styled.table`
  width: 100%;
  table-layout: fixed;
  border-collapse: separate;
  border-spacing: 0;
  font-family: ${SONG};
  th {
    height: 21px;
    padding: 3px 0 0 13px;
    text-align: left;
    font-weight: 700;
    line-height: 16px;
    color: #101c22;
    background: linear-gradient(#fff 30%, #e3ecf2);
    border: solid #b4c8d4;
    border-width: 0 1px 1px 0;
  }
  td {
    height: 25px;
    padding: 0 3px;
    line-height: 16px;
    white-space: nowrap;
    background: #fff;
    border: solid #d8e6ef;
    border-width: 0 1px 1px 0;
    color: #808080;
  }
  td:first-child { background: linear-gradient(#fff, #e6eef4); border-color: #b4c8d4; }
`;

const Cell = styled.td<{ $mono?: boolean; $dark?: boolean; $sel?: boolean }>`
  && {
    ${(p) => p.$mono && "font-size: 10px;"}
    ${(p) => p.$dark && "color: #000;"}
    ${(p) => p.$sel && "background: #aae6ea; color: #000;"}
  }
`;

const Access = styled.span<{ $locked?: boolean }>`
  display: flex;
  align-items: center;
  padding-left: ${(p) => (p.$locked ? 1 : 0)}px;
  color: ${(p) => (p.$locked ? "#808080" : "#000")};
`;

const Check = styled.input`
  appearance: none;
  display: grid;
  place-items: center;
  width: 13px;
  height: 13px;
  margin: 0 auto;
  border: 1px solid ${EDGE};
  border-radius: 2px;
  background: linear-gradient(#d0e5f5, #fff);
  &:checked::before {
    content: "";
    width: 9px;
    height: 9px;
    background: #2c6d9c;
    clip-path: polygon(0 45%, 20% 35%, 42% 62%, 80% 0, 100% 10%, 46% 100%);
  }
`;

const HScroll = styled.div`
  display: flex;
  align-items: center;
  height: 20px;
  margin: auto 0 0 20px;
  padding: 0 6px 0 5px;
  background: #fff;
  border-top: 1px solid #b8d0e0;
`;

const Arrow = styled.span<{ $dir: "left" | "right" }>`
  border: 4px solid transparent;
  border-${(p) => (p.$dir === "left" ? "right" : "left")}: 5px solid #7aa7c0;
  border-${(p) => p.$dir}: 0;
`;

const HThumb = styled.div`
  flex: 563;
  display: grid;
  place-items: center;
  height: 12px;
  margin-left: 6px;
  border: 1px solid #7fa9c2;
  border-radius: 6px;
  background: linear-gradient(#fff, #c5dbe8);
`;

const MoveColumn = styled.div`
  display: flex;
  flex-direction: column;
  align-items: center;
  gap: 10px;
  padding-top: 118px;
  padding-left: 5px;
`;

const ParamTools = styled.div`
  display: flex;
  align-items: center;
  gap: 5px;
  margin: 4px 2px 0 -1px;
  > :nth-child(2) { margin-left: -3px; }
  > :nth-child(4) { margin-right: 2px; }
  > ${SelectBox} { width: 330px; margin-left: auto; }
`;

const PushButton = styled.button<{ $default?: boolean; $w?: number }>`
  width: ${(p) => p.$w ?? 62}px;
  height: 20px;
  border: 1px solid ${EDGE};
  border-radius: 3px;
  background: ${(p) => (p.$default ? "linear-gradient(#e6f2fb, #a9d4f6)" : "linear-gradient(#fff 50%, #d7e9f6)")};
  box-shadow: ${(p) => (p.$default ? "inset 0 0 0 1px #6f9fb8" : "none")};
  font-family: ${SONG};
  line-height: 16px;
  color: #101c22;
`;

const Footer = styled.footer`
  display: flex;
  justify-content: flex-end;
  gap: 14px;
  padding: 10px 7px 7px;
`;

/* -------------------------------------------------------------- taskbar */

const Taskbar = styled.footer`
  position: relative;
  display: flex;
  align-items: stretch;
  min-width: 0;
  color: #fff;
  border-top: 1px solid #56606e;
  background: linear-gradient(90deg, #8094ac 0 100px, #8ea2bb 119px, #a6bedb 200px, #a6bedb 1310px, #8296ad 1345px, #8396ab);
`;

const Launcher = styled.button`
  display: grid;
  place-items: center;
  width: 56px;
`;

const Running = styled.div`
  display: flex;
  gap: 2px;
  margin-left: 7px;
`;

const TaskButton = styled.button<{ $stack?: boolean }>`
  display: grid;
  place-items: center;
  width: ${(p) => (p.$stack ? 53 : 60)}px;
  margin-right: ${(p) => (p.$stack ? 8 : 0)}px;
  border: 1px solid #44546a;
  border-radius: 3px;
  background: linear-gradient(135deg, rgba(255, 255, 255, 0.6), rgba(255, 255, 255, 0.15) 60%);
  box-shadow: inset 0 0 0 1px rgba(255, 255, 255, 0.6)
    ${(p) => (p.$stack ? ", 4px 0 0 -1px #c3d3e6, 5px 0 0 -1px #5d6f87, 7px 0 0 -1px #b9cbe2" : "")};
`;

const Tray = styled.div`
  display: flex;
  align-items: center;
  margin-left: auto;
`;

const TrayText = styled.span<{ $w: number; $song?: boolean; $high?: boolean }>`
  width: ${(p) => p.$w}px;
  text-align: center;
  line-height: 18px;
  white-space: nowrap;
  padding-bottom: ${(p) => (p.$high ? 18 : 0)}px;
  ${(p) => p.$song && css`font-family: ${SONG}; font-size: 10px;`}
`;

const Library = styled.span`
  display: flex;
  align-items: center;
  gap: 4px;
  width: 106px;
  padding-bottom: 6px;
`;

const TrayIcon = styled.button`
  display: grid;
  place-items: center;
  width: 24px;
`;

const ShowDesktop = styled.button`
  width: 14px;
  height: 38px;
  border: 1px solid #56657a;
  background: linear-gradient(90deg, #a5b3c5, #7c8da3);
`;

const Watermark = styled.div`
  position: absolute;
  right: 5px;
  bottom: 5px;
  width: 206px;
  height: 62px;
  background: rgba(255, 255, 255, 0.32);
  pointer-events: none;
  > svg { position: absolute; left: 0; top: 0; }
`;

const MarkName = styled.strong`
  position: absolute;
  left: 71px;
  top: 3px;
  font-size: 29px;
  line-height: 36px;
  font-weight: 700;
  color: rgba(84, 178, 118, 0.6);
  white-space: nowrap;
`;

const MarkUrl = styled.span`
  position: absolute;
  right: 4px;
  bottom: 3px;
  font-size: 15px;
  line-height: 20px;
  color: rgba(80, 118, 132, 0.5);
`;

const Meter = styled.div`
  position: absolute;
  right: 0;
  top: 11px;
  width: 10px;
  height: 60px;
  padding: 14px 3px 4px 4px;
  border-radius: 4px 0 0 4px;
  background: #3c4850;
  &::before {
    content: "";
    display: block;
    height: 100%;
    background: repeating-linear-gradient(transparent 0 1px, #3c4850 1px 2px), linear-gradient(#e0a840 0 25%, #9cc060 35%, #40a8d8 50%);
  }
`;

const Badge = styled.div`
  position: absolute;
  right: -20px;
  top: 166px;
  width: 40px;
  height: 46px;
  padding-left: 4px;
  border: 2px solid #f2f2f2;
  border-radius: 50%;
  outline: 1px solid #999;
  background: radial-gradient(#ff9a30, #ff8410);
  box-shadow: 0 2px 6px rgba(0, 0, 0, 0.4);
  color: #fff;
  font: 700 12px/42px "Liberation Sans", sans-serif;
`;

/* ----------------------------------------------------------------- data */

const mainMenu = ["文件(F)", "编辑(E)", "视图(V)", "插入(I)", "分析(A)", "信息(N)", "应用程序(P)", "工具(T)", "窗口(W)", "帮助(H)"];
const dialogMenu = ["文件", "编辑", "插入", "参数", "实用工具", "显示"];

const mainTools: string[] = [
  "|", "newFile", "open", "save", "print", "mail", "mailLink",
  "|", "undoOff", "drop-", "redoOff", "drop-", "cutOff", "copyOff", "pasteOff", "pasteSpecial", "regen", "regen", "find", "box",
  "|", "repaint", "*spin", "orient", "sphere", "drop", "zoomIn", "zoomOut", "refit", "reorient", "savedView", "layers", "viewMgr",
  "|", "wire", "hiddenLine", "noHidden", "*shaded", "enhanced",
  "|", "*planeEye", "*axisEye", "*pointEye", "*csysEye", "*noteEye",
  "|", "help",
];

const featureGroups = [
  ["sketch", "plane", "axis", "curve", "points>", "csys", "ruler", "chain"],
  ["note", "noteSym", "noteOff"],
  ["hole", "shell", "rib>", "draft", "round", "chamfer"],
  ["extrude", "revolve", "sweep", "blend", "style"],
  ["mirror", "merge", "trim", "pattern"],
];

const tree = [
  { icon: "plane", name: "RIGHT" },
  { icon: "plane", name: "TOP" },
  { icon: "plane", name: "FRONT" },
  { icon: "csys", name: "PRT_CSYS_DEF" },
  { icon: "insert", name: "在此插入" },
];

const opGroups = [["+", "-", "×", "/", "^"], ["()", "[]"], ["="]];

const columns = ["名称", "类型", "值", "指定", "访问", "源"];

const params = [
  { name: "DESCRIPTION", value: "", on: true, locked: false, note: "" },
  { name: "MODELED_BY", value: "", on: true, locked: false, note: "" },
  { name: "CJDBZ", value: "S1", on: false, locked: false, note: "版本标记" },
  { name: "SCALE", value: "", on: false, locked: false, note: "" },
  { name: "CMASS", value: "", on: false, locked: true, note: "" },
  { name: "NAM", value: "", on: false, locked: true, note: "" },
];

/* ------------------------------------------------------------- sections */

const MainTool = ({ name }: { name: string }) => {
  if (name === "|") return <Handle />;
  if (name.startsWith("drop")) return <DropButton aria-label="展开"><Caret $off={name === "drop-"} /></DropButton>;
  if (name === "box")
    return (
      <SelectionBox aria-label="选取">
        <svg width="20" height="18" viewBox="0 0 20 18"><rect x="1" y="2" width="18" height="14" fill="none" stroke="#6d777c" strokeDasharray="4 2" strokeWidth="1.300" /></svg>
        <Caret $off />
      </SelectionBox>
    );
  const on = name[0] === "*";
  const key = on ? name.slice(1) : name;
  return <ToolButton $on={on} aria-label={key}><Icon name={key} /></ToolButton>;
};

const Background = () => (
  <BackWindow>
    <Caption $muted $flush>
      <CaptionTitle />
      <WindowButtons />
    </Caption>
    <BackMenu />
    <BackBody>
      <Note>
        <NoteLine $gap={35} $indent={15}>0\proeWildfire</NoteLine>
        <NoteLine $gap={17} $indent={0} $cjk>称,安装成功了。</NoteLine>
        <NoteLine $gap={304}>olid.prt</NoteLine>
        <NoteLine $gap={288}>IS，AP214_CD格式</NoteLine>
        <NoteLine $cjk>留外观、层、组件</NoteLine>
        <NoteLine $gap={49}>art_solid文件</NoteLine>
        <NoteLine $indent={16} $cjk>金属的默认密度</NoteLine>
      </Note>
      <NoteScroll>
        <svg width="8" height="5"><path d="M0 5L4 0l4 5z" fill="#333" /></svg>
        <Spacer $n={402} />
        <Thumb><svg width="8" height="8"><path d="M0 1h8M0 4h8M0 7h8" stroke="#666" /></svg></Thumb>
        <Spacer $n={55} />
        <svg width="8" height="5"><path d="M0 0h8L4 5z" fill="#333" /></svg>
      </NoteScroll>
      <NoteHScroll><svg width="5" height="8"><path d="M0 0l5 4-5 4z" fill="#333" /></svg></NoteHScroll>
    </BackBody>
    <BackStatus />
  </BackWindow>
);

const ModelTree = () => (
  <SidePanel>
    <Tabs>
      <TabShadow $on><Tab $on aria-label="模型树"><Icon name="treeTab" /></Tab></TabShadow>
      <TabShadow><Tab aria-label="文件夹浏览器"><Icon name="folders" /></Tab></TabShadow>
      <TabShadow><Tab aria-label="收藏夹"><Icon name="favFolder" /></Tab></TabShadow>
    </Tabs>
    <SideBody>
      <TreePane>
        <TreeHead>
          <h2>模型树</h2>
          <HeadButton aria-label="设置"><Icon name="tools" /><Caret /></HeadButton>
          <HeadButton aria-label="显示"><Icon name="list" /><Caret /></HeadButton>
        </TreeHead>
        <TreeBox>
          <TreeRow><Icon name="part" size={15} />MMKS_PART_SOLID.PRT</TreeRow>
          <TreeChildren>
            {tree.map((t) => (
              <TreeItem key={t.name}><Icon name={t.icon} size={16} />{t.name}</TreeItem>
            ))}
          </TreeChildren>
        </TreeBox>
      </TreePane>
      <SashColumn>
        <Sash aria-label="折叠" />
        <Sash $dark aria-label="调整" />
      </SashColumn>
    </SideBody>
  </SidePanel>
);

const RelationsDialog = () => (
  <Dialog role="dialog" aria-label="关系">
    <Caption $muted>
      <Icon name="part" size={15} />
      <CaptionTitle as="h2" $song>关系</CaptionTitle>
      <WindowButtons />
    </Caption>
    <DialogBody>
      <MenuBar $song>{dialogMenu.map((m) => <button key={m}>{m}</button>)}</MenuBar>
      <Scope>
        <legend>查找范围</legend>
        <ScopeRow>
          <Select label="对象类型" value="零件" />
          <BoxButton $flat aria-label="选取"><Icon name="cursor" size={18} /></BoxButton>
          <Select label="对象" value="MMKS_PART_SOLID" tall icon="part" />
        </ScopeRow>
      </Scope>
      <SectionBar><SectionCaret />关系</SectionBar>
      <RelTools>
        <RelGroup>
          {["undo", "redo", "cut", "copy", "paste", "del"].map((n) => (
            <ToolButton key={n} aria-label={n}><Icon name={n} /></ToolButton>
          ))}
        </RelGroup>
        <RelGroup>
          <ToolButton aria-label="切换尺寸">
            <InfoGlyph>
              <span>d1</span>
              <b>i</b>
              <svg width="12" height="6" viewBox="0 0 15 8">{icons.dims}</svg>
              <span>0.0</span>
            </InfoGlyph>
          </ToolButton>
          <ToolButton><Glyph $size={15}>=?</Glyph></ToolButton>
          <ToolButton aria-label="测量"><Icon name="measure" /></ToolButton>
        </RelGroup>
        <RelGroup><ToolButton aria-label="单位"><Icon name="massBox" /></ToolButton></RelGroup>
        <RelGroup>
          <ToolButton><Glyph $size={19} $serif>fx</Glyph></ToolButton>
          <FxDrop aria-label="函数"><Caret $off /></FxDrop>
          <ToolButton aria-label="参数"><Icon name="brackets" /></ToolButton>
          <ToolButton aria-label="质量"><Icon name="mass" /></ToolButton>
        </RelGroup>
        <RelGroup>
          <ToolButton aria-label="排序"><Icon name="sortRel" /></ToolButton>
          <ToolButton aria-label="校验"><Icon name="verify" /></ToolButton>
        </RelGroup>
      </RelTools>
      <Editor>
        <div>
          {opGroups.map((ops) => (
            <OpGroup key={ops[0]}>{ops.map((o) => <Op key={o}>{o}</Op>)}</OpGroup>
          ))}
        </div>
        <RelText aria-label="关系" spellCheck={false} defaultValue={"CMASS=PRO_MP_MASS\nNAM=rel_MODEL_NAME"} />
      </Editor>
      <InitialRow><Select label="执行时机" value="初始" /></InitialRow>
      <SectionBar><SectionCaret />局部参数</SectionBar>
      <Params>
        <FilterRow>
          <label htmlFor="filter">过滤依据</label>
          <Select id="filter" value="缺省" />
          <label htmlFor="sub">子项</label>
          <Select id="sub" value="" />
        </FilterRow>
        <GridRow>
          <GridBox>
            <Table>
              <colgroup>
                <col style={{ width: 20 }} />
                {columns.map((c) => <col key={c} style={{ width: 116 }} />)}
                <col />
              </colgroup>
              <thead>
                <tr><th />{columns.map((c) => <th key={c}>{c}</th>)}<th>说明</th></tr>
              </thead>
              <tbody>
                {params.map((p, i) => (
                  <tr key={p.name}>
                    <td />
                    <Cell $mono $sel={i === 0}>{p.name}</Cell>
                    <td>字符串</td>
                    <Cell $mono $dark>{p.value}</Cell>
                    <td><Check type="checkbox" defaultChecked={p.on} aria-label={`指定 ${p.name}`} /></td>
                    <td>
                      <Access $locked={p.locked}>
                        <Icon name={p.locked ? "locked" : "lockOpen"} size={p.locked ? 16 : 20} />
                        {p.locked ? "锁定" : "完全"}
                      </Access>
                    </td>
                    <td>{p.locked ? "关系" : "用户定义的"}</td>
                    <Cell $dark>{p.note}</Cell>
                  </tr>
                ))}
              </tbody>
            </Table>
            <HScroll>
              <Arrow $dir="left" />
              <HThumb><svg width="8" height="3"><path d="M0 1.500h8" stroke="#4f7d98" strokeWidth="3" strokeDasharray="1 1" /></svg></HThumb>
              <Spacer $n={193} />
              <Arrow $dir="right" />
            </HScroll>
          </GridBox>
          <MoveColumn>
            <button aria-label="上移"><svg width="14" height="14"><path d="M7 0l7 14H0z" fill="#8f9798" /></svg></button>
            <button aria-label="下移"><svg width="14" height="14"><path d="M0 0h14L7 14z" fill="#0c2f9c" stroke="#5a7fc0" strokeWidth=".8" /></svg></button>
          </MoveColumn>
        </GridRow>
        <ParamTools>
          <BoxButton aria-label="添加"><Icon name="plus" size={16} /></BoxButton>
          <BoxButton aria-label="删除"><Icon name="minus" size={18} /></BoxButton>
          <Select label="列视图" value="主要" />
          <PushButton $w={56}>属性...</PushButton>
          <BoxButton aria-label="列"><Icon name="columns" size={18} /></BoxButton>
          <BoxButton aria-label="查找"><Icon name="find" /></BoxButton>
        </ParamTools>
      </Params>
      <Footer>
        <PushButton $default>确定</PushButton>
        <PushButton>重置</PushButton>
        <PushButton>取消</PushButton>
      </Footer>
    </DialogBody>
  </Dialog>
);

const folderArt = (
  <>
    <path d="M2 9V4h8l2 3h8V4h8l3 4v6H2z" fill="#f3dc85" stroke="#b89a45" />
    <path d="M6 4h3" stroke="#22b030" strokeWidth="2.500" />
    <path d="M14 6h3" stroke="#c03020" strokeWidth="2.500" />
    <path d="M21 8h4" stroke="#2080d8" strokeWidth="2.500" />
    <path d="M1.500 10h30v19h-30z" fill="#f7e49b" stroke="#c0a24e" />
    <path d="M6 31V20q0-3 3-3h16q3 0 3 3v11h-5v-7H11v7z" fill="#8fd0ee" stroke="#4393bd" />
  </>
);

const TaskbarView = () => (
  <Taskbar>
    <Launcher aria-label="开始">
      <svg width="38" height="38" viewBox="0 0 38 38">
        <defs>
          <radialGradient id="orb" cx=".5" cy=".85" r=".8">
            <stop offset="0" stopColor="#3fe0ff" />
            <stop offset=".5" stopColor="#1672a8" />
            <stop offset="1" stopColor="#274a68" />
          </radialGradient>
        </defs>
        <circle cx="18" cy="19" r="17.500" fill="url(#orb)" stroke="#2c4254" />
        <path d="M4 14q14-16 28 0q-14-4-28 0z" fill="#cfe0ea" opacity=".5" />
        <path d="M9 11q5-2.500 9 0l-1.500 7q-4-2.500-9 0z" fill="#ef6a2a" />
        <path d="M19 11.500q5 2 10 0l-2 7q-5 2-9.500 0z" fill="#8fc63d" />
        <path d="M7 20q5-2.500 9 0l-1.500 7q-4-2.500-9 0z" fill="#4ba8e8" />
        <path d="M17 20.500q5 2 9.500 0l-2 7q-5 2-9 0z" fill="#fcc82c" />
      </svg>
    </Launcher>
    <Launcher aria-label="应用">
      <svg width="32" height="32" viewBox="0 0 32 32">
        <path d="M9 1A8 8 0 0 0 1 9q0 7 8 7 5 0 6-3-5 0-5-5 0-4 3-6-2-1-4-1z" fill="#88c81e" />
        <path d="M23 1q-8 0-8 7 4-3 8 0 4 2 2 7 6-1 6-7-1-7-8-7z" fill="#3a86ee" />
        <path d="M23 31q8-1 8-8 0-7-8-8-5 0-6 4 5 0 5 5 0 4-3 6 2 1 4 1z" fill="#e04a40" />
        <path d="M9 31q8 0 8-8-4 4-8 1-4-2-2-7-6 1-6 6 0 8 8 8z" fill="#f4b81c" />
      </svg>
    </Launcher>
    <Running>
      <TaskButton $stack aria-label="Internet Explorer">
        <svg width="32" height="32" viewBox="0 0 32 32">
          <path d="M16 4a12 12 0 1 0 11 17h-7q-1.500 3-4.500 3-4.500 0-5-5H28Q29 4 16 4zm-5 10q1-4.500 5-4.500t5 4.500z" fill="#3fb0ee" stroke="#1b6fb8" />
          <path d="M5 29Q-1 27 7 15T27 2q5-1 2 6 0-4-3-3-8 3-15 12T5 29z" fill="#fbc91e" stroke="#c18a0c" strokeWidth=".7" />
        </svg>
      </TaskButton>
      <TaskButton aria-label="记事本">
        <svg width="32" height="32" viewBox="0 0 32 32">
          <path d="M13 3h16l2 24-5 2z" fill="#8a7a50" />
          <path d="M14 4h14l-1 25-10-3z" fill="#eef3f5" stroke="#8b989e" />
          <path d="M12 4h15l-7 23-18-5z" fill="#6fb9cc" stroke="#3d8298" />
          <path d="M12 3h16" stroke="#444" strokeWidth="2.500" strokeDasharray="1 1.500" />
        </svg>
      </TaskButton>
      <TaskButton aria-label="资源管理器"><svg width="32" height="32" viewBox="0 0 33 33">{folderArt}</svg></TaskButton>
      <TaskButton aria-label="聊天">
        <svg width="32" height="32" viewBox="0 0 32 32">
          <defs><clipPath id="round"><circle cx="16" cy="16" r="15.500" /></clipPath></defs>
          <g clipPath="url(#round)">
            <path d="M0 0h32v32H0z" fill="#f3f0ee" />
            <path d="M16 9q5-8 10 1l2 14H16z" fill="#6e3420" />
            <path d="M1 32q1-9 9-10 6 1 7 10zM16 32q0-8 6-9 8 1 9 9z" fill="#d43a3c" />
            <ellipse cx="11" cy="15" rx="5" ry="7" fill="#f3cfae" />
            <ellipse cx="21" cy="16" rx="4" ry="6" fill="#f5d5b8" />
            <path d="M5 14Q3 3 11 2q8 1 6 12-2-3-3-5-4 2-7 1z" fill="#5a2818" />
            <path d="M17 13q0-6 4-7 5 1 5 9-4-1-6-4z" fill="#6e3420" />
          </g>
        </svg>
      </TaskButton>
      <TaskButton $stack aria-label="截图">
        <svg width="32" height="30" viewBox="0 0 32 30">
          <path d="M1 1h30v27H1z" fill="#fff" stroke="#222" />
          <path d="M10 1v4M22 1v4M1 9h4M27 9h4M1 19h4M27 19h4M10 24v4" stroke="#1c4f9c" strokeWidth="1.300" />
          <path d="M14 21h17v7H14zM21 21v7" fill="#fbf8d8" stroke="#1c3f8c" />
          <path d="M16 24h3M23 24h6" stroke="#666" strokeDasharray="1 1" />
        </svg>
      </TaskButton>
    </Running>
    <Tray>
      <TrayText $w={32}>桌面</TrayText>
      <Library><svg width="18" height="18" viewBox="0 0 33 33">{folderArt}</svg>库</Library>
      <TrayText $w={12} $high>»</TrayText>
      <TrayText $w={34} $song>CH</TrayText>
      <TrayText $w={16}>
        <svg width="14" height="18" viewBox="0 0 14 18"><path d="M5 1h7v5H5zM3 4v4h6" fill="none" stroke="#fff" strokeWidth="1.300" /><path d="M4 14h6l-3 3z" fill="#fff" /></svg>
      </TrayText>
      <TrayText $w={78}>45°C<br />CPU温度</TrayText>
      <TrayIcon aria-label="手柄"><svg width="16" height="16" viewBox="0 0 16 16"><path d="M1 2h5v2h4V2h5l1 11h-3l-2-3H5l-2 3H0z" fill="#fff" stroke="#333" /><path d="M2.500 6h4M4.500 4v4" stroke="#2468d0" strokeWidth="1.300" /><circle cx="11.500" cy="6" r="1.500" fill="#e03020" /></svg></TrayIcon>
      <TrayIcon aria-label="驱动"><svg width="18" height="18" viewBox="0 0 18 18"><path d="M2 6l8-5 7 3-1 8-6 4-2-6z" fill="#e0e0e0" stroke="#222" /><path d="M1 11l8-3v3l-8 3z" fill="#e02020" /><path d="M2 14l7-3v3l-6 3z" fill="#20c040" /><path d="M5 17l5-3 1 2-4 2z" fill="#2050e0" /></svg></TrayIcon>
      <TrayIcon aria-label="QQ"><svg width="16" height="18" viewBox="0 0 16 18"><ellipse cx="8" cy="9" rx="6" ry="8" fill="#111" /><path d="M2 9q6 3 12 0l1 2q-7 4-14 0z" fill="#e01818" /><ellipse cx="8" cy="13.500" rx="3.500" ry="3" fill="#fff" /><circle cx="6" cy="5" r="1.500" fill="#fff" /><circle cx="10" cy="5" r="1.500" fill="#fff" /><path d="M5 7.500h6l-3 1.500zM2 16h5v2H2zM9 16h5v2H9z" fill="#f8b010" /></svg></TrayIcon>
      <TrayIcon aria-label="软件"><svg width="16" height="16" viewBox="0 0 16 16"><rect width="16" height="16" rx="3" fill="#fdf7ee" /><path d="M2 7l6-2 6 2v6l-6 2-6-2z" fill="#f0a848" /><path d="M8 5v10" stroke="#fff" /></svg></TrayIcon>
      <TrayIcon aria-label="助手"><svg width="18" height="18" viewBox="0 0 18 18"><path d="M2 18q0-8 7-8t8 8z" fill="#5fa8a0" /><circle cx="10" cy="6" r="4" fill="#eac8b0" /><path d="M5 5q5-7 9 0z" fill="#9a8a86" /><circle cx="5" cy="13" r="3" fill="#f4f4f4" /></svg></TrayIcon>
      <TrayIcon aria-label="安全"><svg width="18" height="18" viewBox="0 0 18 18"><circle cx="9" cy="9" r="8" fill="#f0dc38" /><path d="M4 3q10-3 12 5T9 17q7-8-5-14z" fill="#68b838" /><path d="M9 5v8M5 9h8" stroke="#1c7a30" strokeWidth="2.500" /></svg></TrayIcon>
      <TrayIcon aria-label="音量"><svg width="16" height="16" viewBox="0 0 16 16"><path d="M1 6h3l4-4v12l-4-4H1z" fill="#fff" /><path d="M10 5q2 3 0 6M12 3q4 5 0 10" fill="none" stroke="#fff" strokeWidth="1.300" /></svg></TrayIcon>
      <TrayIcon aria-label="网络"><svg width="18" height="16" viewBox="0 0 18 16"><path d="M5 4h11v7H5zM8 14h6M11 11v3M3 1v5M1 1v3h4V1M3 6v7h3" fill="none" stroke="#fff" strokeWidth="1.500" /></svg></TrayIcon>
      <TrayText $w={82}>14:03<br />2017/9/1</TrayText>
      <ShowDesktop aria-label="显示桌面" />
    </Tray>
  </Taskbar>
);

export default function App() {
  return (
    <Desktop>
      <GlobalStyle />
      <Background />
      <MainWindow>
        <Caption>
          <Icon name="part" size={15} />
          <CaptionTitle>MMKS_PART_SOLID (活动的) - Creo Elements/Pro 5.0</CaptionTitle>
          <WindowButtons tone="blue" close="red" />
        </Caption>
        <MenuBar>{mainMenu.map((m) => <button key={m}>{m}</button>)}</MenuBar>
        <Toolbar>{mainTools.map((t, i) => <MainTool key={i} name={t} />)}</Toolbar>
        <MessageRow>
          <Bullet />
          用C:\Program Files\PTC\Creo Elements\Pro5.0\templates\mmks_part_solid.prt作为模板。
          <FilterHolder><Select label="过滤器" value="全部" /></FilterHolder>
        </MessageRow>
        <Work>
          <ModelTree />
          <Canvas />
          <FeatureBar>
            {featureGroups.map((group) => (
              <React.Fragment key={group[0]}>
                <FeatureHandle />
                {group.map((f) => {
                  const more = f.endsWith(">");
                  const key = more ? f.slice(0, -1) : f;
                  return (
                    <FeatureRow key={key}>
                      <ToolButton aria-label={key}><Icon name={key} /></ToolButton>
                      {more && <SideCaret $off={key === "rib"} />}
                    </FeatureRow>
                  );
                })}
              </React.Fragment>
            ))}
          </FeatureBar>
        </Work>
      </MainWindow>
      <RelationsDialog />
      <TaskbarView />
      <Meter />
      <Badge>80</Badge>
      <Watermark>
        <svg width="80" height="62" viewBox="0 0 80 62">
          <path d="M4 22Q4 4 16 5q12 2 24 16 6 10-2 14-8 2-18-4Q4 20 4 14" fill="none" stroke="#2c4f78" strokeWidth="3.500" opacity=".75" />
          <path d="M42 26q10-8 14 2 2 14-8 24-8 6-16 3" fill="none" stroke="#a8283c" strokeWidth="5" opacity=".7" />
          <path d="M12 44q14-16 28-8M28 54Q10 40 24 34" fill="none" stroke="#6f8196" strokeWidth="2" opacity=".5" />
        </svg>
        <MarkName>野火论坛</MarkName>
        <MarkUrl>www.proewildfire.cn</MarkUrl>
      </Watermark>
    </Desktop>
  );
}
